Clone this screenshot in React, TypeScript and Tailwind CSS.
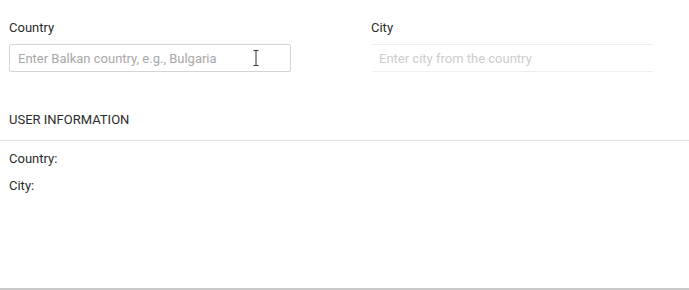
export default function App() {
  return (
    <div className="relative h-[290px] w-[689px] overflow-hidden bg-white font-['Roboto',sans-serif] text-[13px] text-[#2b2b2b]">
      <div className="flex pt-[19px]">
        <div className="w-[362px] pl-[9px]">
          <label className="block leading-[18px]">Country</label>
          <div className="relative mt-[7px] h-[28px] w-[282px] rounded-[2px] border border-[#d5d5d5] bg-white">
            <input
              className="h-full w-full bg-transparent px-[8px] text-[13px] text-[#2b2b2b] outline-none placeholder:text-[#a8a8a8]"
              placeholder="Enter Balkan country, e.g., Bulgaria"
            />
            <svg
              className="pointer-events-none absolute left-[243px] top-[5px]"
              width="6"
              height="16"
              viewBox="0 0 6 16"
            >
              <path d="M0.5 0.5H5.5M3 0.5V15.5M0.5 15.5H5.5" stroke="#3a2a3a" strokeWidth="1" fill="none" />
            </svg>
          </div>
        </div>
        <div className="pl-[9px]">
          <label className="block leading-[18px]">City</label>
          <div className="mt-[7px] ml-[2px] h-[28px] w-[280px] border-y border-[#eeeeee]">
            <input
              disabled
              className="h-full w-full bg-transparent px-[6px] text-[13px] outline-none placeholder:text-[#cccccc]"
              placeholder="Enter city from the country"
            />
          </div>
        </div>
      </div>
      <div className="mt-[39px] px-[9px] pb-[11px] leading-[18px] text-[#2b2b2b]">USER INFORMATION</div>
      <div className="h-px w-full bg-[#e2e2e2]" />
      <div className="mt-[9px] space-y-[9px] px-[9px] leading-[18px]">
        <div>Country:</div>
        <div>City:</div>
      </div>
      <div className="absolute bottom-0 left-0 h-[2px] w-full bg-[#c8c8c8]" />
    </div>
  )
}
